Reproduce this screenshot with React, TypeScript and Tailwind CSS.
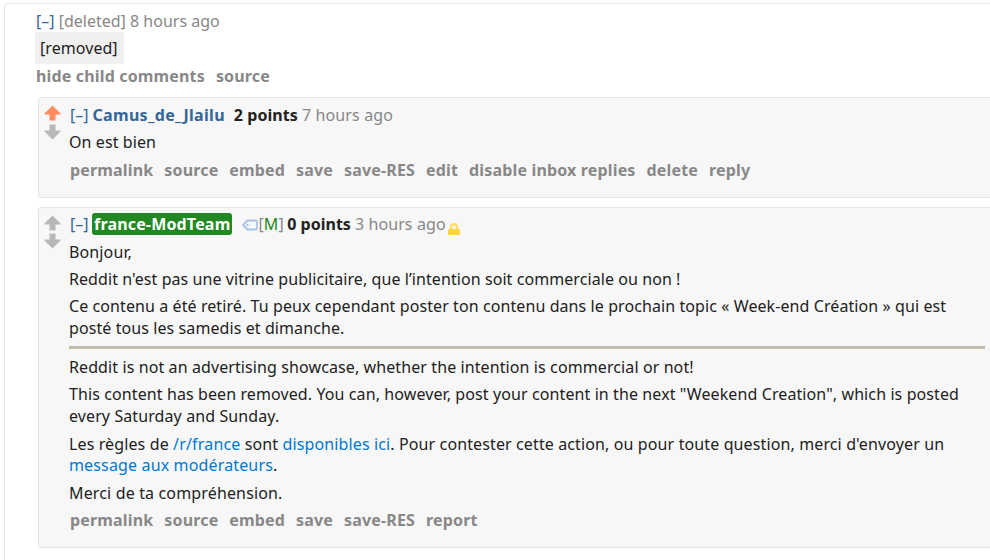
import { ReactNode } from "react"

function Arrow({ color, down = false }: { color: string, down?: boolean }) {
  return (
    <svg className={down ? "rotate-180" : ""} width="17" height="17" viewBox="0 0 17 17">
      <path d="M8.5 0.5 L16.5 8.5 V9.5 H11.5 V15.5 H5.5 V9.5 H0.5 V8.5 Z" fill={color} />
    </svg>
  )
}

function Buttons({ items }: { items: string[] }) {
  return (
    <ul className="flex gap-[11px] text-[#888888] font-bold leading-[22px] tracking-[0.16px]">
      {items.map(item => <li key={item}>{item}</li>)}
    </ul>
  )
}

function Comment({ className, upvoted = false, children }: { className: string, upvoted?: boolean, children: ReactNode }) {
  return (
    <div className={`flex w-[960px] shrink-0 border border-[#e6e6e6] bg-[#f7f7f7] rounded-[3px] ${className}`}>
      <div className={`flex flex-col w-[30px] shrink-0 pl-[5px] pt-[7px] ${upvoted ? "gap-[1px]" : "gap-0"}`}>
        <Arrow color={upvoted ? "#ff8b60" : "#b8b8b8"} />
        <Arrow color="#b8b8b8" down />
      </div>
      <div className="w-[916px] shrink-0">{children}</div>
    </div>
  )
}

export default function App() {
  return (
    <div className="w-[990px] h-[560px] overflow-hidden bg-white pl-[4px] pt-[3px] font-['Noto_Sans',sans-serif] text-[16px] leading-[22px] text-[#222222] whitespace-nowrap">
      <div className="w-[1000px] h-[600px] border border-[#e6e6e6] rounded-[3px] pl-[31px]">
        <p className="pt-[6px] text-[#888888]"><span className="text-[#336699]">[–]</span> [deleted] 8 hours ago</p>
        <p className="w-[89px] h-[32px] -ml-[1px] bg-[#f0f0f0] pl-[5px] pt-[5px] tracking-[0.06px]">[removed]</p>
        <div className="pt-[1px]">
          <Buttons items={["hide child comments", "source"]} />
        </div>

        <Comment className="h-[101px] mt-[10px] ml-[2px]" upvoted>
          <p className="pt-[6px] pl-[1px] flex text-[#888888]">
            <span className="text-[#336699]">[–]</span>
            <b className="ml-[4px] text-[#336699] tracking-[0.3px]">Camus_de_Jlailu</b>
            <b className="ml-[9px] text-[#222222] tracking-[0.06px]">2 points</b>
            <span className="ml-[4px] tracking-[0.13px]">7 hours ago</span>
          </p>
          <p className="pt-[5px] pb-[6px] tracking-[0.09px]">On est bien</p>
          <div className="pl-[1px]">
            <Buttons items={["permalink", "source", "embed", "save", "save-RES", "edit", "disable inbox replies", "delete", "reply"]} />
          </div>
        </Comment>

        <Comment className="h-[341px] mt-[9px] ml-[2px]">
          <p className="mt-[5px] pl-[1px] h-[22px] flex items-center text-[#888888]">
            <span className="text-[#336699]">[–]</span>
            <b className="ml-[3.5px] pl-[2px] pr-[2px] rounded-[3px] bg-[#228822] text-white tracking-[0.17px]">france-ModTeam</b>
            <svg className="ml-[10px] mt-[2px]" width="16" height="12" viewBox="0 0 16 12">
              <path d="M5.5 1.5 H13 Q15 1.5 15 3.5 V8.5 Q15 10.5 13 10.5 H5.5 L1 6 Z" fill="#f4f8fc" stroke="#a9c4e2" strokeWidth="1.8" strokeLinejoin="round" />
              <circle cx="5.5" cy="6" r="1" fill="#8fb4d9" />
            </svg>
            <span className="tracking-[0.1px]">[<span className="text-[#228822]">M</span>]</span>
            <b className="ml-[3.5px] mr-[4px] text-[#222222]">0 points</b>
            <span className="tracking-[0.1px]">3 hours ago</span>
            <svg className="ml-[2.5px] mt-[10px]" width="12" height="12" viewBox="0 0 12 12">
              <path d="M3 7 V4 Q3 1.2 6 1.2 Q9 1.2 9 4 V7" fill="none" stroke="#ffdc5c" strokeWidth="2.2" />
              <path d="M1 6 H11 L12 7 V12 H0 V7 Z" fill="#ffd53d" />
            </svg>
          </p>
          <div className="pt-[6px] pb-[5px]">
            <p className="tracking-[0.12px]">Bonjour,</p>
            <p className="mt-[5px] tracking-[0.073px]">Reddit n'est pas une vitrine publicitaire, que l’intention soit commerciale ou non !</p>
            <p className="mt-[5px] tracking-[0.087px]">Ce contenu a été retiré. Tu peux cependant poster ton contenu dans le prochain topic « Week-end Création » qui est<br />posté tous les samedis et dimanche.</p>
            <hr className="mt-[7px] mb-[7px] border-0 h-[3px] bg-[#c1bfa9]" />
            <p className="tracking-[0.1px]">Reddit is not an advertising showcase, whether the intention is commercial or not!</p>
            <p className="mt-[5px] tracking-[0.1px]">This content has been removed. You can, however, post your content in the next "Weekend Creation", which is posted<br />every Saturday and Sunday.</p>
            <p className="mt-[6px] tracking-[0.12px]">Les règles de <a className="text-[#0079d3] tracking-[0.17px]">/r/france</a> sont <a className="text-[#0079d3]">disponibles ici</a>. Pour contester cette action, ou pour toute question, merci d'envoyer un</p>
            <p className="-mt-[1px] tracking-[0.15px]"><a className="text-[#0079d3]">message aux modérateurs</a>.</p>
            <p className="mt-[6px] tracking-[0.15px]">Merci de ta compréhension.</p>
          </div>
          <div className="pl-[1px]">
            <Buttons items={["permalink", "source", "embed", "save", "save-RES", "report"]} />
          </div>
        </Comment>
      </div>
    </div>
  )
}
